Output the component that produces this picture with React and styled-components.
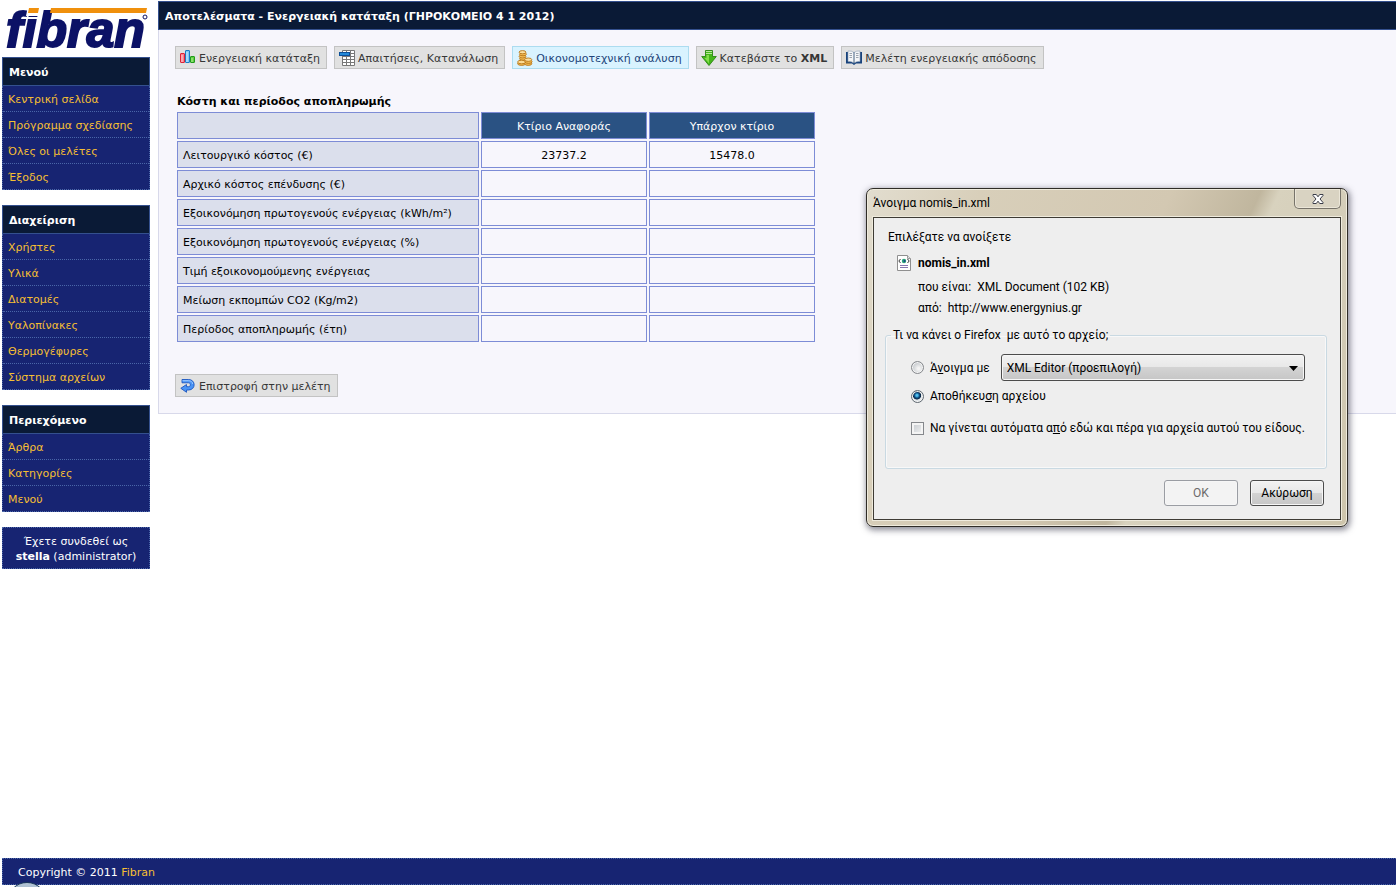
import React from "react";
import styled, { createGlobalStyle, css } from "styled-components";

const GlobalStyle = createGlobalStyle`
  * { box-sizing: border-box; }
  body {
    margin: 0;
    background: #ffffff;
    color: #000000;
    font: 11px/15px "DejaVu Sans", Verdana, sans-serif;
  }
`;

/* ---------- page frame ---------- */

const Page = styled.div`
  position: relative;
  min-height: 100vh;
  display: flex;
  flex-direction: column;
  padding: 1px 0 2px 2px;
  overflow: hidden;
`;

const Columns = styled.div`
  flex: 1;
  display: flex;
  align-items: flex-start;
  gap: 8px;
`;

const Sidebar = styled.aside`
  flex: 0 0 148px;
  display: flex;
  flex-direction: column;
  gap: 15px;
`;

const Brand = styled.div`
  display: flex;
  flex-direction: column;
`;

const LogoLink = styled.a`
  display: block;
  height: 56px;
  svg { display: block; }
`;

const Panel = styled.main`
  flex: 1;
  min-width: 0;
  background: #f7f6fc;
  border: 1px solid #d8d9ea;
  border-width: 0 0 1px 1px;
`;

const barStyle = css`
  margin: 0;
  height: 29px;
  padding: 2px 6px 0;
  border: 1px solid #34508e;
  background: #0a1a36;
  color: #ffffff;
  font-size: 11px;
  font-weight: bold;
  line-height: 25px;
`;

const PanelTitle = styled.h1`
  ${barStyle}
  margin-left: -1px;
  border-right: 0;
`;

const PanelBody = styled.div`
  padding: 16px;
`;

/* ---------- side menus ---------- */

const MenuBox = styled.nav`
  display: flex;
  flex-direction: column;
`;

const MenuTitle = styled.h2`
  ${barStyle}
`;

const MenuList = styled.ul`
  margin: 0;
  padding: 0;
  list-style: none;
  background: #172472;
  border: 1px dotted #4a66a8;
  border-width: 0 1px;
`;

const MenuItem = styled.li`
  height: 26px;
  border-bottom: 1px dotted #4a66a8;
`;

const MenuLink = styled.a`
  display: block;
  padding: 2px 5px 0;
  line-height: 24px;
  color: #f5bf33;
  text-decoration: none;
`;

const UserBox = styled.p`
  margin: 0;
  padding: 6px 0 4px;
  border: 1px dotted #4a66a8;
  background: #172472;
  color: #ffffff;
  text-align: center;
`;

/* ---------- main content ---------- */

const Toolbar = styled.div`
  display: flex;
  flex-wrap: wrap;
  gap: 7px;
`;

const ToolButton = styled.button`
  display: flex;
  align-items: center;
  gap: 3px;
  height: 23px;
  padding: 0 6px 0 4px;
  border: 1px solid ${(p) => (p.$active ? "#acdcf0" : "#c3c3c3")};
  background: ${(p) => (p.$active ? "#d9f3ff" : "#e1e1e1")};
  color: ${(p) => (p.$active ? "#22447a" : "#363636")};
  font: inherit;
  white-space: nowrap;
  svg { flex: none; }
  span { padding-top: 2px; }
`;

const CostTable = styled.table`
  width: 642px;
  margin: 25px 0 30px;
  border-collapse: separate;
  border-spacing: 2px;
  table-layout: fixed;
`;

const Caption = styled.caption`
  padding: 0 2px 1px;
  text-align: left;
  font-weight: bold;
`;

const cellStyle = css`
  height: 27px;
  padding: 2px 5px 0;
  border: 1px solid #7d8cd6;
  font-weight: normal;
`;

const ColHead = styled.th`
  ${cellStyle}
  background: #2a5283;
  color: #ffffff;
`;

const RowHead = styled.th`
  ${cellStyle}
  background: #dbdfec;
  text-align: left;
`;

const Corner = styled.td`
  ${cellStyle}
  width: 302px;
  background: #dbdfec;
`;

const Cell = styled.td`
  ${cellStyle}
  background: #f7f6fc;
  text-align: center;
`;

/* ---------- footer ---------- */

const Footer = styled.footer`
  position: relative;
  height: 27px;
  padding: 2px 15px 0;
  border: 1px dotted #4a66a8;
  border-right: 0;
  background: #172472;
  color: #ffffff;
  line-height: 24px;
  a { color: #f5bf33; text-decoration: none; }
`;

const Orb = styled.span`
  position: absolute;
  left: 4px;
  top: 23px;
  width: 40px;
  height: 40px;
  border: 1px solid #1d3a5c;
  border-radius: 50%;
  background: linear-gradient(#b4c5d6, #6f8fae);
`;

/* ---------- download dialog ---------- */

const Window = styled.section`
  position: absolute;
  left: 866px;
  top: 188px;
  width: 482px;
  padding: 0 6px 6px;
  border: 1px solid #2f2c27;
  border-radius: 7px;
  background: linear-gradient(115deg, #e2ddcf 0%, #d8cfba 18%, #d3c8b2 48%, #c0b69e 62%, #d8d2be 65%, #d3ccb8 80%, #cdc4ab 100%);
  box-shadow: inset 0 0 0 1px #efebdd, 1px 2px 6px 1px rgba(40, 40, 60, 0.55);
  font: 12px/16px Roboto, "Open Sans", sans-serif;
`;

const TitleBar = styled.header`
  display: flex;
  justify-content: space-between;
  height: 28px;
`;

const WindowTitle = styled.h2`
  margin: 0;
  font: inherit;
  line-height: 28px;
`;

const CloseButton = styled.button`
  display: flex;
  align-items: center;
  justify-content: center;
  width: 47px;
  height: 20px;
  padding: 0;
  border: 1px solid #77736a;
  border-top: 0;
  border-radius: 0 0 5px 5px;
  background: #d9d3c2;
  box-shadow: inset 0 0 0 1px #ebe6d8;
`;

const Client = styled.div`
  padding: 11px 14px 13px;
  border: 1px solid #3e3b34;
  background: #eeeeee;
  box-shadow: 0 0 0 1px #efebdd;
`;

const Line = styled.p`
  margin: 0;
`;

const FileInfo = styled.div`
  display: grid;
  grid-template-columns: 16px 1fr;
  gap: 3px 6px;
  margin: 10px 0 11px 8px;
`;

const FileName = styled.strong`
  align-self: center;
`;

const Facts = styled.dl`
  grid-column: 2;
  display: flex;
  flex-direction: column;
  gap: 5px;
  margin: 5px 0 0;
  div { display: flex; gap: 6px; }
  dd { margin: 0; }
`;

const Choices = styled.fieldset`
  display: flex;
  flex-direction: column;
  min-width: 0;
  margin: 0 -1px 11px -3px;
  padding: 11px 21px 32px 25px;
  border: 1px solid #c9d9e2;
  border-radius: 3px;
  box-shadow: inset 0 0 0 1px #f8f8f8;
`;

const Legend = styled.legend`
  margin-left: -20px;
  padding: 0 2px;
`;

const Choice = styled.div`
  display: flex;
  align-items: center;
  margin-top: ${(p) => p.$gap || 0}px;
  label { white-space: nowrap; }
`;

const boxStyle = css`
  appearance: none;
  flex: none;
  width: 13px;
  height: 13px;
  margin: 0 6px 0 0;
  border: 1px solid #85888c;
`;

const Radio = styled.input.attrs({ type: "radio" })`
  ${boxStyle}
  border-radius: 50%;
  background: radial-gradient(circle at 60% 60%, #f4f4f4 10%, #c4c8cc 70%);
  box-shadow: inset 0 0 0 1px #f4f4f4;
  &:checked {
    border-color: #5f6870;
    background: radial-gradient(circle at 45% 40%, #4fc0ee 0 10%, #0d4f86 28%, #0a2540 42%, #dfe4e8 50%);
  }
`;

const Check = styled.input.attrs({ type: "checkbox" })`
  ${boxStyle}
  background: linear-gradient(135deg, #c3c8cd, #f4f4f4);
  box-shadow: inset 0 0 0 2px #f4f4f4;
`;

const SelectFrame = styled.div`
  position: relative;
  flex: 1;
  margin-left: 11px;
  svg { position: absolute; right: 7px; top: 12px; pointer-events: none; }
`;

const glossy = css`
  border: 1px solid #4c4c4c;
  border-radius: 3px;
  background: linear-gradient(#f2f2f2 0%, #e8e8e8 48%, #d3d3d3 50%, #c6c6c6 100%);
  box-shadow: inset 0 0 0 1px #f6f6f6;
  color: #000000;
  font: inherit;
`;

const AppSelect = styled.select`
  ${glossy}
  appearance: none;
  display: block;
  width: 100%;
  height: 27px;
  padding: 0 5px;
`;

const Actions = styled.div`
  display: flex;
  justify-content: flex-end;
  gap: 12px;
  padding-right: 2px;
`;

const ActionButton = styled.button`
  ${glossy}
  width: 74px;
  height: 26px;
  padding: 0;
  &:disabled {
    border-color: #9a9da3;
    background: #f3f3f3;
    color: #6b6b6b;
  }
`;

/* ---------- drawings ---------- */

const Logo = () => (
  <svg width="148" height="56" viewBox="0 0 148 56" role="img" aria-label="fibran">
    <text
      x="4"
      y="46"
      fontFamily="Liberation Sans, Arial, sans-serif"
      fontSize="50"
      fontWeight="bold"
      fontStyle="italic"
      fill="#0c1266"
      stroke="#0c1266"
      strokeWidth="2"
    >
      fibran
    </text>
    <path d="M26 5H40L38 15H24Z" fill="#ffffff" />
    <path d="M27 7H37L36 12H26Z" fill="#f0900c" />
    <path d="M49 7H145L144 12H48Z" fill="#f0900c" />
    <circle cx="143" cy="16" r="2" fill="#ffffff" stroke="#0c1266" />
  </svg>
);

const ChartIcon = () => (
  <svg width="16" height="16" viewBox="0 0 16 16">
    <rect x="0.5" y="3.5" width="4" height="9" rx="0.5" fill="#f7808e" stroke="#dc2438" />
    <path d="M2 5V12" stroke="#fbd0d4" />
    <rect x="5.500" y="0.5" width="4" height="12" rx="0.5" fill="#79c8f8" stroke="#1b7cc4" />
    <path d="M7 2V12" stroke="#d3effd" />
    <rect x="10.5" y="6.500" width="4" height="6" rx="0.5" fill="#5fd040" stroke="#219a1c" />
    <path d="M12 8V12" stroke="#b6f09e" />
  </svg>
);

const TableIcon = () => (
  <svg width="16" height="16" viewBox="0 0 16 16">
    <path d="M3.5 .5H15.5V15.5H3.5Z" fill="#ffffff" stroke="#777777" />
    <path d="M7.5 1V15M11.5 1V15M4 6.5H15M4 9.5H15M4 12.5H15M11 3.5H15" stroke="#777777" fill="none" />
    <rect x="0.5" y="2.5" width="10" height="3" fill="#2389d8" stroke="#0b4f9a" />
  </svg>
);

const CoinsIcon = () => (
  <svg width="16" height="16" viewBox="0 0 16 16" fill="#f3bd55" stroke="#b8761a" strokeWidth="0.9">
    <ellipse cx="6" cy="11" rx="3.400" ry="1.6" />
    <ellipse cx="6" cy="8.700" rx="3.400" ry="1.6" />
    <ellipse cx="5.500" cy="6.400" rx="3.400" ry="1.6" />
    <ellipse cx="6" cy="4.200" rx="3.400" ry="1.6" />
    <ellipse cx="5.500" cy="2.200" rx="3.400" ry="1.6" fill="#fbe0a0" />
    <ellipse cx="4.600" cy="13.600" rx="4" ry="1.8" />
    <ellipse cx="4.600" cy="12" rx="4" ry="1.8" fill="#fbdb94" />
    <ellipse cx="11.200" cy="13.700" rx="3.600" ry="1.700" />
    <ellipse cx="11.500" cy="11.700" rx="3.600" ry="1.700" />
    <ellipse cx="11.200" cy="9.700" rx="3.600" ry="1.700" fill="#fbe0a0" />
  </svg>
);

const DownIcon = () => (
  <svg width="16" height="16" viewBox="0 0 16 16">
    <path d="M4.5 .5H11.5V6.5H15.3L8 15.5L.7 6.5H4.5Z" fill="#45b71a" stroke="#2b8712" strokeWidth="0.9" />
    <path d="M5 1.5H11M5 3.5H11" stroke="#b7e89b" />
    <path d="M5.5 5V8H3.5L8 13.5V5Z" fill="#83dd4b" />
  </svg>
);

const BookIcon = () => (
  <svg width="16" height="16" viewBox="0 0 16 16">
    <path d="M0 2H16V13.5H10L8 15L6 13.5H0Z" fill="#17427c" />
    <path d="M2 1Q5.500 .5 8 2.500Q10.500 .5 14 1V11.500Q10.500 11 8 13Q5.500 11 2 11.500Z" fill="#f4f6f8" stroke="#8da0b4" strokeWidth="0.6" />
    <path d="M8 2.500V13" stroke="#466280" />
    <path d="M3.500 3.500H6M3.500 5.500H6M3.500 7.500H6M10 3.500H12.500M10 5.500H12.500M10 7.500H12.500" stroke="#9aa3ad" />
  </svg>
);

const BackIcon = () => (
  <svg width="16" height="16" viewBox="0 0 16 16">
    <path d="M2 1.500H8.500C16 1.500 16 12 8.500 12H6.500V14.300L.8 10.300L6.500 6.500V8.700H8.500C11 8.700 11 4.800 8.500 4.800H2Z" fill="#4a94f5" stroke="#1c56c0" strokeWidth="0.9" />
    <path d="M2.500 2.700H8.500C11 2.700 12.500 4 12.700 6" stroke="#9cc8ff" fill="none" />
  </svg>
);

const XmlFileIcon = () => (
  <svg width="16" height="16" viewBox="0 0 16 16">
    <path d="M1.500 .5H11.500L14.500 3.500V15.500H1.500Z" fill="#ffffff" stroke="#8f8f8f" />
    <path d="M11.500 .5V3.500H14.500" fill="#e2e2e2" stroke="#9a9a9a" />
    <path d="M4.500 4L2.800 6L4.500 8M11.500 4L13.200 6L11.500 8" stroke="#333333" fill="none" />
    <circle cx="8" cy="6" r="2.200" fill="#2aa37a" />
    <circle cx="8.500" cy="6" r="1" fill="#173f8a" />
    <path d="M4 10.500H12M4 12.500H12" stroke="#8677b0" />
  </svg>
);

const CloseIcon = () => (
  <svg width="12" height="10" viewBox="0 0 12 10">
    <path d="M1 .5H4.300L6 2.800L7.700 .5H11V1.500L8 5L11 8.500V9.500H7.700L6 7.200L4.300 9.500H1V8.500L4 5L1 1.500Z" fill="#ffffff" stroke="#3a3c48" />
  </svg>
);

/* ---------- data ---------- */

const menus = [
  { title: "Μενού", items: ["Κεντρική σελίδα", "Πρόγραμμα σχεδίασης", "Όλες οι μελέτες", "Έξοδος"] },
  { title: "Διαχείριση", items: ["Χρήστες", "Υλικά", "Διατομές", "Υαλοπίνακες", "Θερμογέφυρες", "Σύστημα αρχείων"] },
  { title: "Περιεχόμενο", items: ["Άρθρα", "Κατηγορίες", "Μενού"] },
];

const rows = [
  ["Λειτουργικό κόστος (€)", "23737.2", "15478.0"],
  ["Αρχικό κόστος επένδυσης (€)", "", ""],
  ["Εξοικονόμηση πρωτογενούς ενέργειας (kWh/m²)", "", ""],
  ["Εξοικονόμηση πρωτογενούς ενέργειας (%)", "", ""],
  ["Τιμή εξοικονομούμενης ενέργειας", "", ""],
  ["Μείωση εκπομπών CO2 (Kg/m2)", "", ""],
  ["Περίοδος αποπληρωμής (έτη)", "", ""],
];

const Menu = ({ title, items }) => (
  <MenuBox aria-label={title}>
    <MenuTitle>{title}</MenuTitle>
    <MenuList>
      {items.map((item) => (
        <MenuItem key={item}>
          <MenuLink href="#">{item}</MenuLink>
        </MenuItem>
      ))}
    </MenuList>
  </MenuBox>
);

const DownloadDialog = () => (
  <Window role="dialog" aria-labelledby="dialog-title">
    <TitleBar>
      <WindowTitle id="dialog-title">Άνοιγμα nomis_in.xml</WindowTitle>
      <CloseButton aria-label="Κλείσιμο">
        <CloseIcon />
      </CloseButton>
    </TitleBar>
    <Client>
      <Line>Επιλέξατε να ανοίξετε</Line>
      <FileInfo>
        <XmlFileIcon />
        <FileName>nomis_in.xml</FileName>
        <Facts>
          <div>
            <dt>που είναι:</dt>
            <dd>XML Document (102 KB)</dd>
          </div>
          <div>
            <dt>από:</dt>
            <dd>http://www.energynius.gr</dd>
          </div>
        </Facts>
      </FileInfo>
      <Choices>
        <Legend>Τι να κάνει ο Firefox&nbsp; με αυτό το αρχείο;</Legend>
        <Choice>
          <Radio id="open-with" name="action" />
          <label htmlFor="open-with">Ά<u>ν</u>οιγμα με</label>
          <SelectFrame>
            <AppSelect aria-label="Εφαρμογή">
              <option>XML Editor (προεπιλογή)</option>
            </AppSelect>
            <svg width="9" height="5" viewBox="0 0 9 5">
              <path d="M0 0H9L4.500 5Z" fill="#000000" />
            </svg>
          </SelectFrame>
        </Choice>
        <Choice $gap={7}>
          <Radio id="save-file" name="action" defaultChecked />
          <label htmlFor="save-file">Αποθήκευ<u>σ</u>η αρχείου</label>
        </Choice>
        <Choice $gap={16}>
          <Check id="always" />
          <label htmlFor="always">Να γίνεται αυτόματα α<u>π</u>ό εδώ και πέρα για αρχεία αυτού του είδους.</label>
        </Choice>
      </Choices>
      <Actions>
        <ActionButton disabled>OK</ActionButton>
        <ActionButton>Ακύρωση</ActionButton>
      </Actions>
    </Client>
  </Window>
);

export default function App() {
  return (
    <Page>
      <GlobalStyle />
      <Columns>
        <Sidebar>
          <Brand>
            <LogoLink href="#"><Logo /></LogoLink>
            <Menu {...menus[0]} />
          </Brand>
          <Menu {...menus[1]} />
          <Menu {...menus[2]} />
          <UserBox>
            Έχετε συνδεθεί ως<br />
            <b>stella</b> (administrator)
          </UserBox>
        </Sidebar>
        <Panel>
          <PanelTitle>Αποτελέσματα - Ενεργειακή κατάταξη (ΓΗΡΟΚΟΜΕΙΟ 4 1 2012)</PanelTitle>
          <PanelBody>
            <Toolbar>
              <ToolButton><ChartIcon /><span>Ενεργειακή κατάταξη</span></ToolButton>
              <ToolButton><TableIcon /><span>Απαιτήσεις, Κατανάλωση</span></ToolButton>
              <ToolButton $active><CoinsIcon /><span>Οικονομοτεχνική ανάλυση</span></ToolButton>
              <ToolButton><DownIcon /><span>Κατεβάστε το <b>XML</b></span></ToolButton>
              <ToolButton><BookIcon /><span>Μελέτη ενεργειακής απόδοσης</span></ToolButton>
            </Toolbar>
            <CostTable>
              <Caption>Κόστη και περίοδος αποπληρωμής</Caption>
              <thead>
                <tr>
                  <Corner />
                  <ColHead scope="col">Κτίριο Αναφοράς</ColHead>
                  <ColHead scope="col">Υπάρχον κτίριο</ColHead>
                </tr>
              </thead>
              <tbody>
                {rows.map(([label, reference, existing]) => (
                  <tr key={label}>
                    <RowHead scope="row">{label}</RowHead>
                    <Cell>{reference}</Cell>
                    <Cell>{existing}</Cell>
                  </tr>
                ))}
              </tbody>
            </CostTable>
            <Toolbar>
              <ToolButton><BackIcon /><span>Επιστροφή στην μελέτη</span></ToolButton>
            </Toolbar>
          </PanelBody>
        </Panel>
      </Columns>
      <Footer>
        Copyright © 2011 <a href="#">Fibran</a>
        <Orb />
      </Footer>
      <DownloadDialog />
    </Page>
  );
}
